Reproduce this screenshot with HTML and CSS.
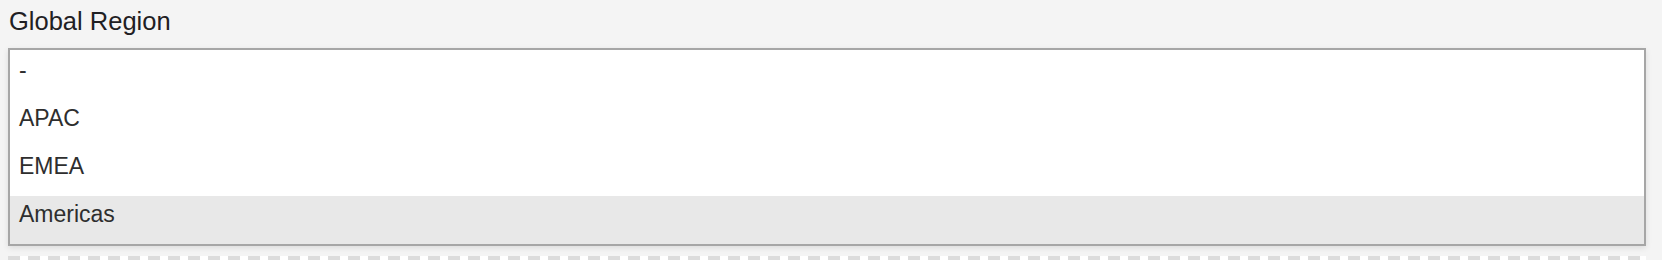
FILE: index.html
```html
<!DOCTYPE html>
<html lang="en">
<head>
<meta charset="utf-8">
<title>Global Region</title>
<link rel="stylesheet" href="styles.css">
</head>
<body>
<div class="page">
  <label class="field-label">Global Region</label>
  <div class="listbox" role="listbox">
    <div class="option">-</div>
    <div class="option">APAC</div>
    <div class="option">EMEA</div>
    <div class="option selected">Americas</div>
  </div>
  <div class="dash-row"></div>
</div>
</body>
</html>
```
FILE: styles.css
```css
html, body {
  margin: 0;
  padding: 0;
  background: #f4f4f4;
}
.page {
  padding: 7px 16px 0 8px;
  font-family: "Liberation Sans", Arial, sans-serif;
}
.field-label {
  display: block;
  font-size: 25.5px;
  line-height: 28px;
  color: #1f2023;
  padding-left: 1px;
  margin-bottom: 13px;
}
.listbox {
  box-sizing: border-box;
  height: 198px;
  background: #ffffff;
  border: 2px solid #a6a6a6;
  box-shadow: 0 2px 6px rgba(0, 0, 0, 0.10);
  padding-top: 2px;
  overflow: hidden;
}
.option {
  box-sizing: border-box;
  height: 48px;
  padding: 6px 10px 0 9px;
  font-size: 23px;
  line-height: 25px;
  color: #2e2e2e;
}
.option.selected {
  background: #e8e8e8;
}
.dash-row {
  margin-top: 10px;
  height: 6px;
  background: repeating-linear-gradient(to right, #dcdcdc 0, #dcdcdc 12px, #ffffff 12px, #ffffff 20px);
}
```
